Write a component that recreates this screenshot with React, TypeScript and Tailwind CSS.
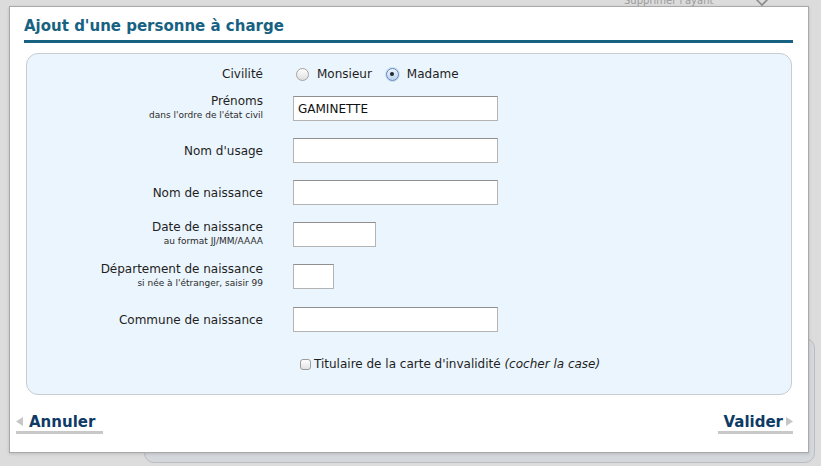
import React from "react";

const font = { fontFamily: '"DejaVu Sans", Verdana, sans-serif' };

function Radio({ checked }: { checked?: boolean }) {
  if (checked) {
    return (
      <span className="flex h-[13px] w-[13px] items-center justify-center rounded-full border border-[#5f88b8] bg-gradient-to-b from-[#eef4fc] to-[#bcd2ee] shadow-[0_0_0_1px_rgba(120,160,210,0.25)]">
        <span className="block h-[4px] w-[4px] rounded-full bg-[#1d2735]" />
      </span>
    );
  }
  return (
    <span className="block h-[13px] w-[13px] rounded-full border border-[#a2a2a2] bg-gradient-to-b from-[#ffffff] to-[#dedede]" />
  );
}

function Field({ w, value }: { w: string; value?: string }) {
  return (
    <div
      className={`${w} flex h-[25px] items-center border border-[#b4b4b4] border-t-[#8f8f8f] bg-white pl-[4px] text-[12px] text-[#111]`}
    >
      {value}
    </div>
  );
}

function Row({
  label,
  sub,
  w,
  value,
}: {
  label: string;
  sub?: string;
  w: string;
  value?: string;
}) {
  return (
    <div className="flex h-[42px] items-start">
      <div className="w-[236px] text-right text-[#1e1e1e]">
        {sub ? (
          <div className="-mt-[2px]">
            <div className="text-[12px] leading-[14px]">{label}</div>
            <div className="mt-[2px] text-[9px] leading-[11px] text-[#2a2a2a]">{sub}</div>
          </div>
        ) : (
          <div className="pt-[1px] text-[12px] leading-[24px]">{label}</div>
        )}
      </div>
      <div className="ml-[30px]">
        <Field w={w} value={value} />
      </div>
    </div>
  );
}

export default function App() {
  return (
    <div
      className="relative h-[466px] w-[821px] overflow-hidden bg-[#dcdcdc]"
      style={font}
    >
      {/* background window elements */}
      <div className="absolute left-[624px] top-[-5px] text-[10px] leading-[12px] text-[#9a9a9a]">
        Supprimer l'ayant
      </div>
      <svg className="absolute left-[752px] top-[-4px]" width="20" height="11" viewBox="0 0 20 11">
        <path d="M2 1 L10 9 L18 1" fill="none" stroke="#8c8c8c" strokeWidth="1.6" />
      </svg>
      <div className="absolute bottom-[3px] left-[144px] right-[6px] top-[338px] rounded-[10px] border border-[#b9bcc0] bg-[#d4d8dd]" />

      {/* modal */}
      <div className="relative ml-[9px] mt-[6px] flex h-[447px] w-[800px] flex-col border border-[#a9a9a9] bg-white shadow-[0_1px_3px_rgba(0,0,0,0.15)]">
        <div className="ml-[14px] mr-[15px] mt-[10px] border-b-[3px] border-[#176282] pb-[5px]">
          <h1 className="text-[15px] font-bold leading-[18px] text-[#176282]">
            Ajout d'une personne à charge
          </h1>
        </div>

        <div className="ml-[16px] mt-[10px] h-[342px] w-[766px] rounded-[12px] border border-[#c6ccd2] bg-[#ebf5fd] pt-[9px]">
          <div className="flex h-[22px] items-center">
            <div className="w-[236px] text-right text-[12px] text-[#1e1e1e]">Civilité</div>
            <div className="ml-[33px] flex items-center">
              <Radio />
              <span className="ml-[8px] text-[12px] text-[#1e1e1e]">Monsieur</span>
              <span className="ml-[14px]">
                <Radio checked />
              </span>
              <span className="ml-[8px] text-[12px] text-[#1e1e1e]">Madame</span>
            </div>
          </div>
          <div className="mt-[11px]">
            <Row label="Prénoms" sub="dans l'ordre de l'état civil" w="w-[205px]" value="GAMINETTE" />
            <Row label="Nom d'usage" w="w-[205px]" />
            <Row label="Nom de naissance" w="w-[205px]" />
            <Row label="Date de naissance" sub="au format JJ/MM/AAAA" w="w-[83px]" />
            <Row label="Département de naissance" sub="si née à l'étranger, saisir 99" w="w-[41px]" />
            <div className="h-[1px]" />
            <Row label="Commune de naissance" w="w-[205px]" />
          </div>
          <div className="ml-[273px] mt-[5px] flex h-[20px] items-center text-[12px] text-[#1e1e1e]">
            <span className="block h-[11px] w-[11px] rounded-[3px] border border-[#9c9c9c] bg-gradient-to-b from-[#ffffff] to-[#e2e2e2]" />
            <span className="ml-[3px]">
              Titulaire de la carte d'invalidité <i>(cocher la case)</i>
            </span>
          </div>
        </div>

        <div className="ml-[6px] mr-[15px] mt-[18px] flex items-start justify-between">
          <div className="flex items-center border-b-[3px] border-[#c8c8c8] pr-[8px]">
            <svg width="7" height="9" viewBox="0 0 7 9" className="mt-[-2px]">
              <path d="M7 0 L0 4.5 L7 9 Z" fill="#c6c6c6" />
            </svg>
            <span className="ml-[6px] text-[15px] font-bold leading-[18px] text-[#0e3a66]">
              Annuler
            </span>
          </div>
          <div className="flex items-center border-b-[3px] border-[#c8c8c8] pl-[5px]">
            <span className="text-[15px] font-bold leading-[18px] text-[#0e3a66]">
              Valider
            </span>
            <svg width="7" height="9" viewBox="0 0 7 9" className="ml-[3px] mt-[-2px]">
              <path d="M0 0 L7 4.5 L0 9 Z" fill="#c6c6c6" />
            </svg>
          </div>
        </div>
      </div>
    </div>
  );
}
